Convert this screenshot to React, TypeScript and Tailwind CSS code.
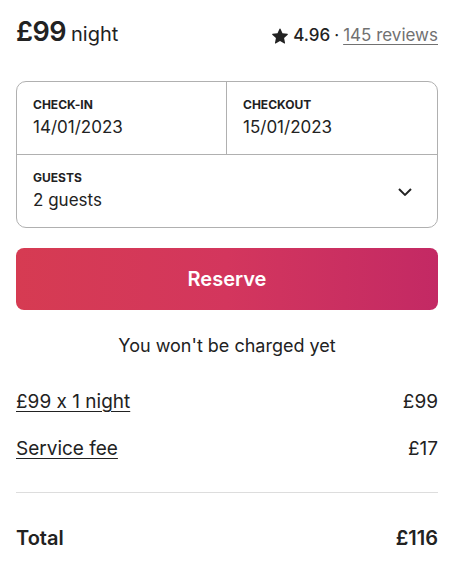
const font = { fontFamily: "Inter, 'Noto Sans', sans-serif", fontFeatureSettings: "'calt' 0" };

function Row({ label, value }: { label: string; value: string }) {
  return (
    <div className="flex justify-between items-center text-[19px] text-[#222]">
      <span className="underline underline-offset-[3px] decoration-[1px]">{label}</span>
      <span>{value}</span>
    </div>
  );
}

export default function App() {
  return (
    <div className="bg-white w-[454px] h-[574px] px-4 pt-[12px] text-[#222]" style={font}>
      <div className="flex justify-between items-baseline">
        <div className="flex items-baseline gap-[5px]">
          <span className="text-[27px] font-semibold tracking-[-0.5px]">£99</span>
          <span className="text-[20px]">night</span>
        </div>
        <div className="flex items-baseline text-[17px]">
          <svg viewBox="0 0 32 32" className="w-[16px] h-[16px] mr-[5px] self-center fill-[#222]">
            <path d="M15.1 1.58l-4.13 8.88-9.86 1.27a1 1 0 0 0-.54 1.74l7.3 6.57-1.97 9.85a1 1 0 0 0 1.48 1.06l8.62-5 8.63 5a1 1 0 0 0 1.48-1.06l-1.97-9.85 7.3-6.57a1 1 0 0 0-.55-1.73l-9.86-1.28-4.12-8.88a1 1 0 0 0-1.82 0z" />
          </svg>
          <span className="font-medium">4.96</span>
          <span className="mx-[4px] text-[#222]">·</span>
          <span className="text-[#717171] underline underline-offset-[3px]">145 reviews</span>
        </div>
      </div>

      <div className="mt-[28px] border border-[#b0b0b0] rounded-[10px]">
        <div className="grid grid-cols-2 border-b border-[#b0b0b0]">
          <div className="px-4 pt-[15px] pb-[14px] border-r border-[#b0b0b0]">
            <div className="text-[12px] font-bold leading-4">CHECK-IN</div>
            <div className="text-[17px] leading-[26px] mt-[1px]">14/01/2023</div>
          </div>
          <div className="px-4 pt-[15px] pb-[14px]">
            <div className="text-[12px] font-bold leading-4">CHECKOUT</div>
            <div className="text-[17px] leading-[26px] mt-[1px]">15/01/2023</div>
          </div>
        </div>
        <div className="flex items-center justify-between px-4 pt-[15px] pb-[14px]">
          <div>
            <div className="text-[12px] font-bold leading-4">GUESTS</div>
            <div className="text-[17px] leading-[26px] mt-[1px]">2 guests</div>
          </div>
          <svg viewBox="0 0 32 32" className="w-4 h-4 mr-[8px] fill-none stroke-[#222]" strokeWidth={4}>
            <path d="M28 12L16.7 23.3a1 1 0 0 1-1.4 0L4 12" />
          </svg>
        </div>
      </div>

      <button className="mt-[20px] w-full h-[62px] rounded-[8px] text-white text-[20px] font-semibold bg-gradient-to-r from-[#d63b52] via-[#d3365d] to-[#c32964]">
        Reserve
      </button>

      <div className="text-center text-[18px] mt-[22px]">You won't be charged yet</div>

      <div className="mt-[29px] flex flex-col gap-[19px]">
        <Row label="£99 x 1 night" value="£99" />
        <Row label="Service fee" value="£17" />
      </div>

      <div className="mt-[28px] border-t border-[#dddddd]" />

      <div className="mt-[30px] flex justify-between items-center text-[20px] font-semibold">
        <span>Total</span>
        <span>£116</span>
      </div>
    </div>
  );
}
